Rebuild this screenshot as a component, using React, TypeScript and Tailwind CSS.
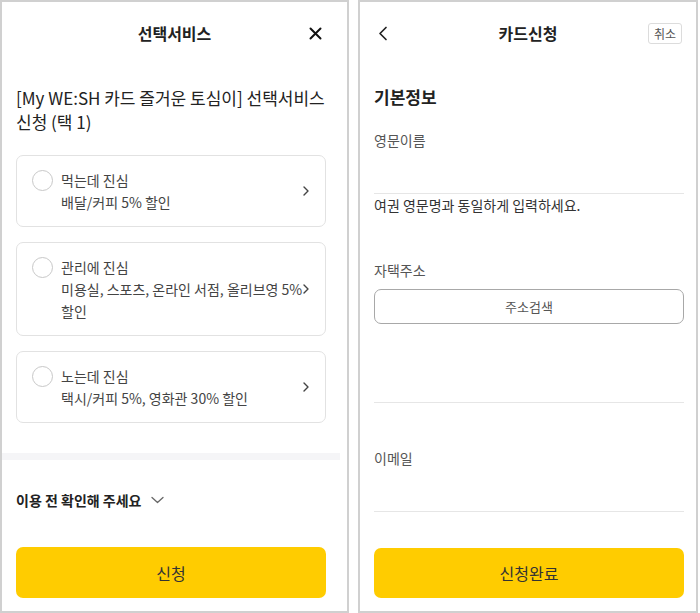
import React from 'react';

const font = { fontFamily: '"Noto Sans CJK KR", "Noto Sans", sans-serif' };

const options = [
  { title: '먹는데 진심', lines: ['배달/커피 5% 할인'] },
  { title: '관리에 진심', lines: ['미용실, 스포츠, 온라인 서점, 올리브영 5%', '할인'] },
  { title: '노는데 진심', lines: ['택시/커피 5%, 영화관 30% 할인'] },
];

const ChevronRight = () => (
  <svg width="8" height="12" viewBox="0 0 8 12" fill="none" className="shrink-0">
    <path d="M2 2l4 4-4 4" stroke="#444" strokeWidth="1.4" strokeLinecap="round" strokeLinejoin="round" />
  </svg>
);

const ServicePanel = () => (
  <div className="w-[349px] h-full border-2 border-[#d0d0d0] flex flex-col bg-white">
    <div className="h-[62px] grid grid-cols-[1fr_auto_1fr] items-center">
      <div />
      <div className="text-[16px] font-bold text-[#222]">선택서비스</div>
      <div className="flex justify-end pr-[25px]">
        <svg width="13" height="13" viewBox="0 0 13 13" fill="none">
          <path d="M1.5 1.5l10 10M11.5 1.5l-10 10" stroke="#111" strokeWidth="2" strokeLinecap="round" />
        </svg>
      </div>
    </div>

    <div className="mt-[22px] pl-[14px] pr-[18px] text-[17px] leading-[24px] text-[#222]">
      [My WE:SH 카드 즐거운 토심이] 선택서비스 신청 (택 1)
    </div>

    <div className="mt-[21px] ml-[14px] w-[310px] flex flex-col gap-[15px]">
      {options.map((o) => (
        <div
          key={o.title}
          className="border border-[#e2e2e2] rounded-[7px] pl-[15px] pr-[15px] py-[13px] flex items-center"
        >
          <div className="flex flex-1 items-start gap-[8px]">
            <div className="mt-[1px] w-[21px] h-[21px] rounded-full border border-[#c8c8c8] shrink-0" />
            <div className="text-[14px] leading-[22px] text-[#444] whitespace-nowrap">
              <div>{o.title}</div>
              {o.lines.map((l) => (
                <div key={l}>{l}</div>
              ))}
            </div>
          </div>
          <ChevronRight />
        </div>
      ))}
    </div>

    <div className="mt-[30px] mr-[7px] h-[7px] bg-[#f5f5f7]" />

    <div className="mt-[29px] pl-[14px] flex items-center gap-[10px]">
      <span className="text-[14px] leading-[22px] font-bold text-[#222]">이용 전 확인해 주세요</span>
      <svg width="13" height="8" viewBox="0 0 13 8" fill="none">
        <path d="M1 1.5l5.5 5 5.5-5" stroke="#666" strokeWidth="1.3" strokeLinecap="round" strokeLinejoin="round" />
      </svg>
    </div>

    <button className="mt-auto mb-[13px] ml-[14px] w-[310px] h-[51px] rounded-[7px] bg-[#ffcc00] text-[16px] text-[#333]">
      신청
    </button>
  </div>
);

const FieldLabel = ({ children, className = '' }: { children: React.ReactNode; className?: string }) => (
  <div className={`text-[14px] leading-[22px] text-[#555] ${className}`}>{children}</div>
);

const CardPanel = () => (
  <div className="ml-[9px] w-[340px] h-full border-2 border-[#d0d0d0] flex flex-col bg-white">
    <div className="h-[62px] grid grid-cols-[1fr_auto_1fr] items-center">
      <div className="pl-[18px]">
        <svg width="10" height="15" viewBox="0 0 10 15" fill="none">
          <path d="M8 1.5L2 7.5l6 6" stroke="#222" strokeWidth="1.7" strokeLinecap="round" strokeLinejoin="round" />
        </svg>
      </div>
      <div className="text-[16px] font-bold text-[#222]">카드신청</div>
      <div className="flex justify-end pr-[14px]">
        <div className="h-[21px] px-[5px] border border-[#dcdcdc] rounded-[3px] text-[12px] leading-[19px] text-[#555]">
          취소
        </div>
      </div>
    </div>

    <div className="pl-[14px] w-[324px] flex flex-col">
      <div className="mt-[21px] text-[17px] leading-[24px] font-bold text-[#222]">기본정보</div>

      <FieldLabel className="mt-[20px]">영문이름</FieldLabel>
      <div className="h-[43px] border-b border-[#e6e6e6]" />
      <div className="text-[14px] leading-[22px] text-[#333]">여권 영문명과 동일하게 입력하세요.</div>

      <FieldLabel className="mt-[43px]">자택주소</FieldLabel>
      <button className="mt-[8px] h-[35px] rounded-[7px] border border-[#a8a8a8] text-[13px] text-[#555]">
        주소검색
      </button>
      <div className="h-[79px] border-b border-[#e6e6e6]" />

      <FieldLabel className="mt-[44px]">이메일</FieldLabel>
      <div className="h-[43px] border-b border-[#e6e6e6]" />
    </div>

    <button className="mt-auto mb-[13px] ml-[14px] w-[310px] h-[50px] rounded-[7px] bg-[#ffcc00] text-[16px] text-[#333]">
      신청완료
    </button>
  </div>
);

export default function App() {
  return (
    <div className="w-[700px] h-[613px] flex bg-white" style={font}>
      <ServicePanel />
      <CardPanel />
    </div>
  );
}
